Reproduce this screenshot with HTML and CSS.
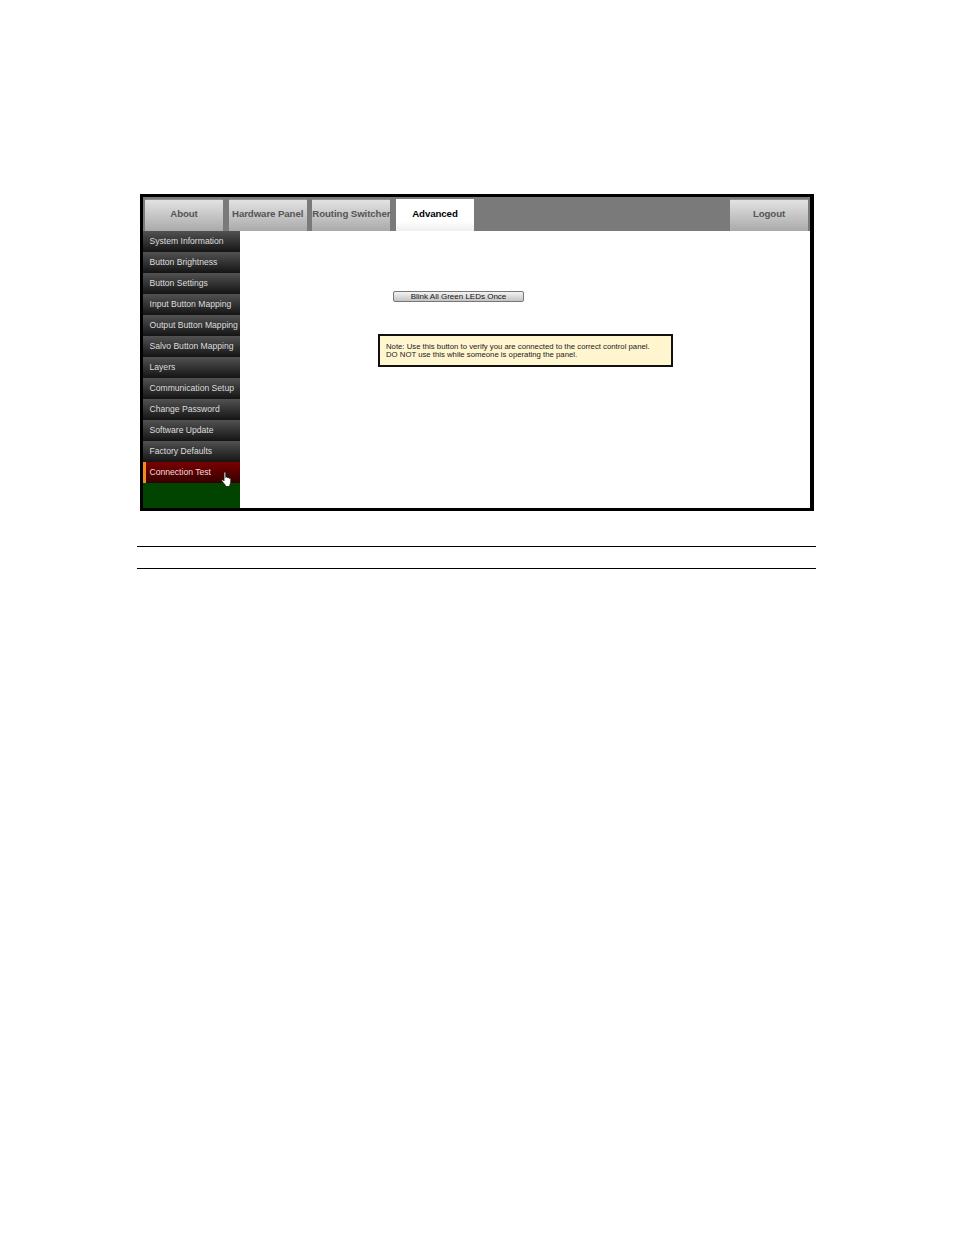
FILE: index.html
```html
<!DOCTYPE html>
<html>

<head>
	<meta charset="utf-8">
	<title>Advanced - Connection Test</title>
	<link rel="stylesheet" href="styles.css">
</head>

<body>
	<div class="frame">
		<div class="tabs">
			<a class="tab">About</a>
			<a class="tab">Hardware Panel</a>
			<a class="tab">Routing Switcher</a>
			<a class="tab active">Advanced</a>
			<a class="tab tab-logout">Logout</a>
		</div>

		<div class="main">
			<div class="menu">
				<a class="item">System Information</a>
				<a class="item">Button Brightness</a>
				<a class="item">Button Settings</a>
				<a class="item">Input Button Mapping</a>
				<a class="item">Output Button Mapping</a>
				<a class="item">Salvo Button Mapping</a>
				<a class="item">Layers</a>
				<a class="item">Communication Setup</a>
				<a class="item">Change Password</a>
				<a class="item">Software Update</a>
				<a class="item">Factory Defaults</a>
				<a class="item current">Connection Test
					<svg class="cursor" width="12" height="16" viewBox="0 0 12 16">
						<path d="M3 2c0-1.300 1.800-1.300 1.800 0v4.500c.2-1 1.700-1 1.800 0v.5c.3-.8 1.600-.8 1.700.1v.5c.4-.7 1.500-.5 1.500.5V11c0 1.200-.6 2-1 3v1.500H4.200V14L1 10.200c-.7-1 .3-2 1.300-1.200l.7.8z" fill="#fff" stroke="#111" stroke-width=".8" />
					</svg>
				</a>
				<div class="menu-fill"></div>
			</div>

			<div class="content">
				<button class="blink" type="button">Blink All Green LEDs Once</button>
				<div class="note">
					Note: Use this button to verify you are connected to the correct control panel.<br>
					DO NOT use this while someone is operating the panel.
				</div>
			</div>
		</div>
	</div>

	<div class="rule-block"></div>
</body>

</html>
```

FILE: styles.css
```css
body {
	margin: 0;
	background-color: white;
	font-family: "Liberation Sans", Arial, sans-serif;
}

.frame {
	width: 667px;
	height: 311px;
	margin: 194px 0 0 140px;
	border: 3px solid #000;
	border-right-width: 4px;
}

.tabs {
	display: flex;
	height: 34px;
	box-sizing: border-box;
	padding: 2px 0 0 2px;
	background-color: #7a7a7a;
}

.tab {
	width: 78px;
	margin-right: 5.67px;
	box-sizing: border-box;
	border-top: 1px solid #8e8e8e;
	background: linear-gradient(#e2e2e2, #a9aaa9);
	color: #555;
	font-size: 9.7px;
	font-weight: bold;
	letter-spacing: -0.1px;
	line-height: 28px;
	text-align: center;
	white-space: nowrap;
}

.tab.active {
	background: linear-gradient(#fff 70%, #eee);
	border-top-color: #fff;
	color: #000;
}

.tab-logout {
	margin-left: auto;
	margin-right: 2px;
}

.main {
	display: flex;
	height: 277px;
}

.menu {
	display: flex;
	flex-direction: column;
	width: 97px;
}

.item {
	position: relative;
	height: 21px;
	box-sizing: border-box;
	padding-left: 6.500px;
	background: linear-gradient(#525252, #141414);
	color: #ddd;
	font-size: 8.6px;
	line-height: 20px;
	white-space: nowrap;
}

.item.current {
	padding-left: 3.500px;
	border-left: 3px solid #f58a1f;
	background: linear-gradient(#7a0000, #350000);
	color: #f0dcdc;
}

.cursor {
	position: absolute;
	top: 9px;
	left: 75px;
}

.menu-fill {
	flex: 1;
	background-color: #004400;
}

.content {
	flex: 1;
	background-color: white;
}

.blink {
	display: block;
	width: 131px;
	height: 11px;
	margin: 60px 0 0 153px;
	padding: 0;
	border: 1px solid #777;
	border-radius: 2px;
	background: linear-gradient(#f4f4f4, #c4c4c4);
	color: #111;
	font-family: inherit;
	font-size: 8px;
	line-height: 9px;
}

.note {
	width: 295px;
	height: 33px;
	margin: 32px 0 0 138px;
	box-sizing: border-box;
	padding: 7px 0 0 6px;
	border: 2px solid #111;
	background-color: #fff5cf;
	color: #222;
	font-size: 7.76px;
	line-height: 7.500px;
	white-space: nowrap;
}

.rule-block {
	width: 679px;
	height: 21px;
	margin: 35px 0 0 137px;
	border-top: 1px solid #000;
	border-bottom: 1px solid #000;
}
```
